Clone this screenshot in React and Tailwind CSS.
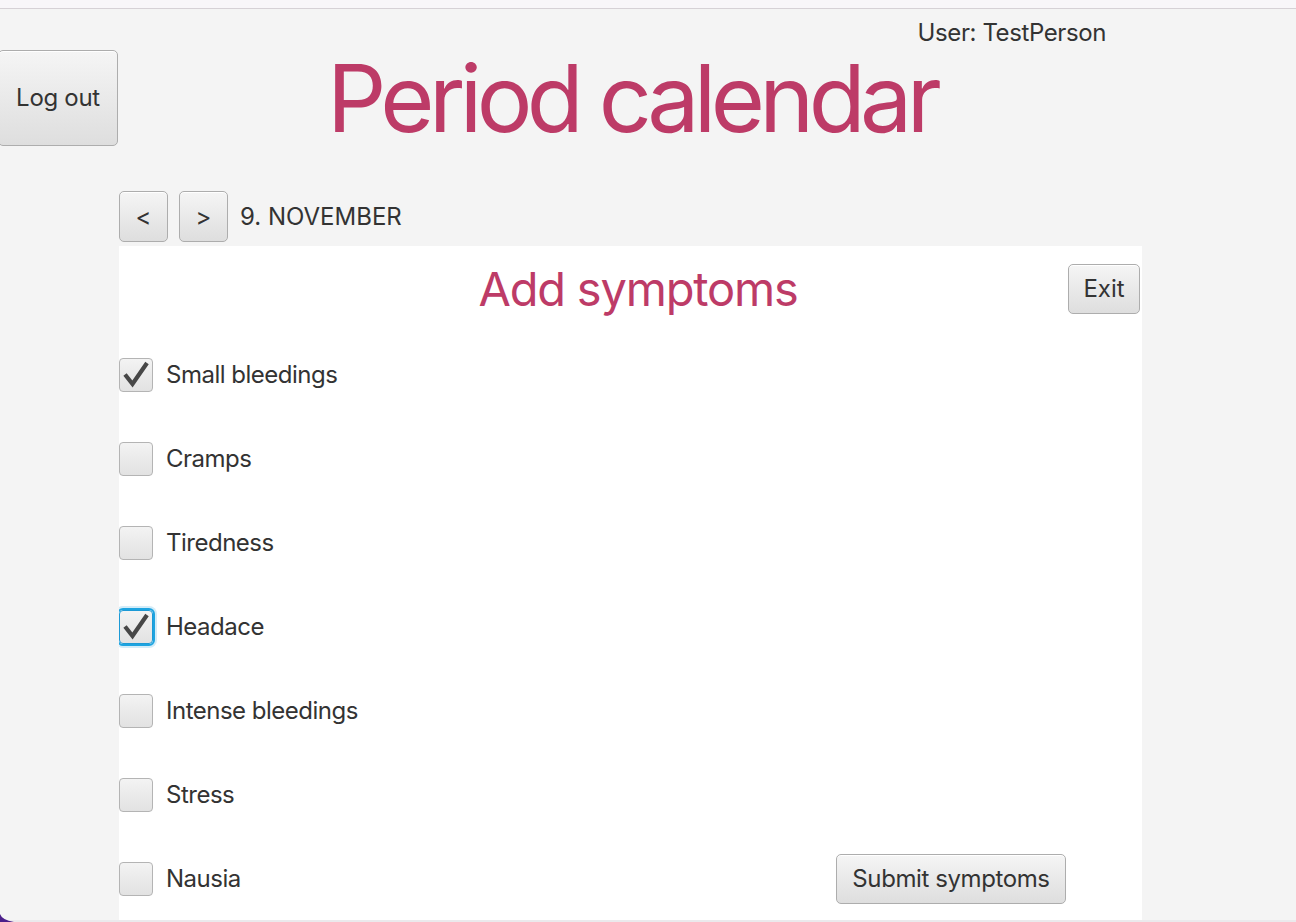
import React, { useState } from 'react'

const symptoms = [
  { name: 'Small bleedings', checked: true },
  { name: 'Cramps', checked: false },
  { name: 'Tiredness', checked: false },
  { name: 'Headace', checked: true, focused: true },
  { name: 'Intense bleedings', checked: false },
  { name: 'Stress', checked: false },
  { name: 'Nausia', checked: false },
]

const btn =
  'flex items-center justify-center rounded-[5px] border border-[#adadad] bg-gradient-to-b from-[#f5f5f5] to-[#dedede] text-[#333] shadow-[inset_0_1px_0_#ffffff]'

function CheckBox({ checked, focused, onClick }) {
  return (
    <div
      onClick={onClick}
      className={
        'w-[34px] h-[34px] shrink-0 rounded-[4px] border bg-gradient-to-b from-[#f3f3f3] to-[#e2e2e2] flex items-center justify-center ' +
        (focused
          ? 'border-[#1c9ad6] ring-2 ring-[#1ea4e0] shadow-[0_0_0_4px_#d3ecf8]'
          : 'border-[#b4b4b4]')
      }
    >
      {checked && (
        <svg width="28" height="28" viewBox="0 0 28 28" className="mt-[-2px]">
          <path d="M3 14.5 L10.5 24 L25 3" fill="none" stroke="#474747" strokeWidth="4.2" strokeLinejoin="miter" strokeLinecap="butt" />
        </svg>
      )}
    </div>
  )
}

export default function App() {
  const [items, setItems] = useState(symptoms)

  function toggle(i) {
    setItems(items.map((s, k) => (k === i ? { ...s, checked: !s.checked } : s)))
  }

  return (
    <div className="relative w-[1296px] h-[922px] overflow-hidden bg-[#f4f4f4] text-[#333] font-['Inter','Noto_Sans',sans-serif]">
      <div className="h-[9px] bg-[#f8f6f9] border-b border-[#d6d1d6]" />

      {/* user */}
      <div className="mt-[12px] h-[24px] flex justify-end pr-[190px] text-[24px] leading-[24px] tracking-[-0.4px]">
        User: TestPerson
      </div>

      {/* header */}
      <div className="mt-[5px] flex items-start">
        <button className={btn + ' ml-[-2px] w-[120px] h-[96px] text-[24px] tracking-[-0.3px]'}>Log out</button>
        <h1 className="ml-[209px] text-[93px] leading-[96px] text-[#bd3b67] tracking-[-5.6px] whitespace-nowrap">
          Period calendar
        </h1>
      </div>

      {/* date nav */}
      <div className="mt-[45px] ml-[119px] flex items-center h-[51px]">
        <button className={btn + ' w-[49px] h-[51px] text-[24px]'}>&lt;</button>
        <button className={btn + ' ml-[11px] w-[49px] h-[51px] text-[24px]'}>&gt;</button>
        <span className="ml-[12px] text-[24px] tracking-[0px]">9. NOVEMBER</span>
      </div>

      {/* panel */}
      <div className="mt-[4px] ml-[119px] w-[1023px] h-[674px] bg-white overflow-hidden">
        <div className="mt-[18px] flex items-center pr-[2px]">
          <div className="w-[72px]" />
          <h2 className="flex-1 pl-[17px] text-center text-[47px] leading-[50px] text-[#bd3b67] tracking-[-1.2px]">
            Add symptoms
          </h2>
          <button className={btn + ' w-[72px] h-[50px] text-[24px]'}>Exit</button>
        </div>

        <div className="mt-[19px] flex flex-col">
          {items.map((s, i) => (
            <div key={s.name} className="h-[84px] flex items-center">
              <CheckBox checked={s.checked} focused={s.focused} onClick={() => toggle(i)} />
              <span className="ml-[13px] text-[24px] tracking-[-0.5px]">{s.name}</span>
              {i === items.length - 1 && (
                <button className={btn + ' ml-auto mr-[76px] w-[230px] h-[50px] text-[24px] tracking-[-0.4px]'}>
                  Submit symptoms
                </button>
              )}
            </div>
          ))}
        </div>
      </div>

      <div className="absolute left-0 bottom-0 w-full h-[2px] bg-[#ebe9ec]" />
      <svg className="absolute left-0 bottom-0" width="16" height="8" viewBox="0 0 16 8">
        <path d="M0 0 Q2 6 14 8 L0 8 Z" fill="#4b1f8a" />
      </svg>
    </div>
  )
}
